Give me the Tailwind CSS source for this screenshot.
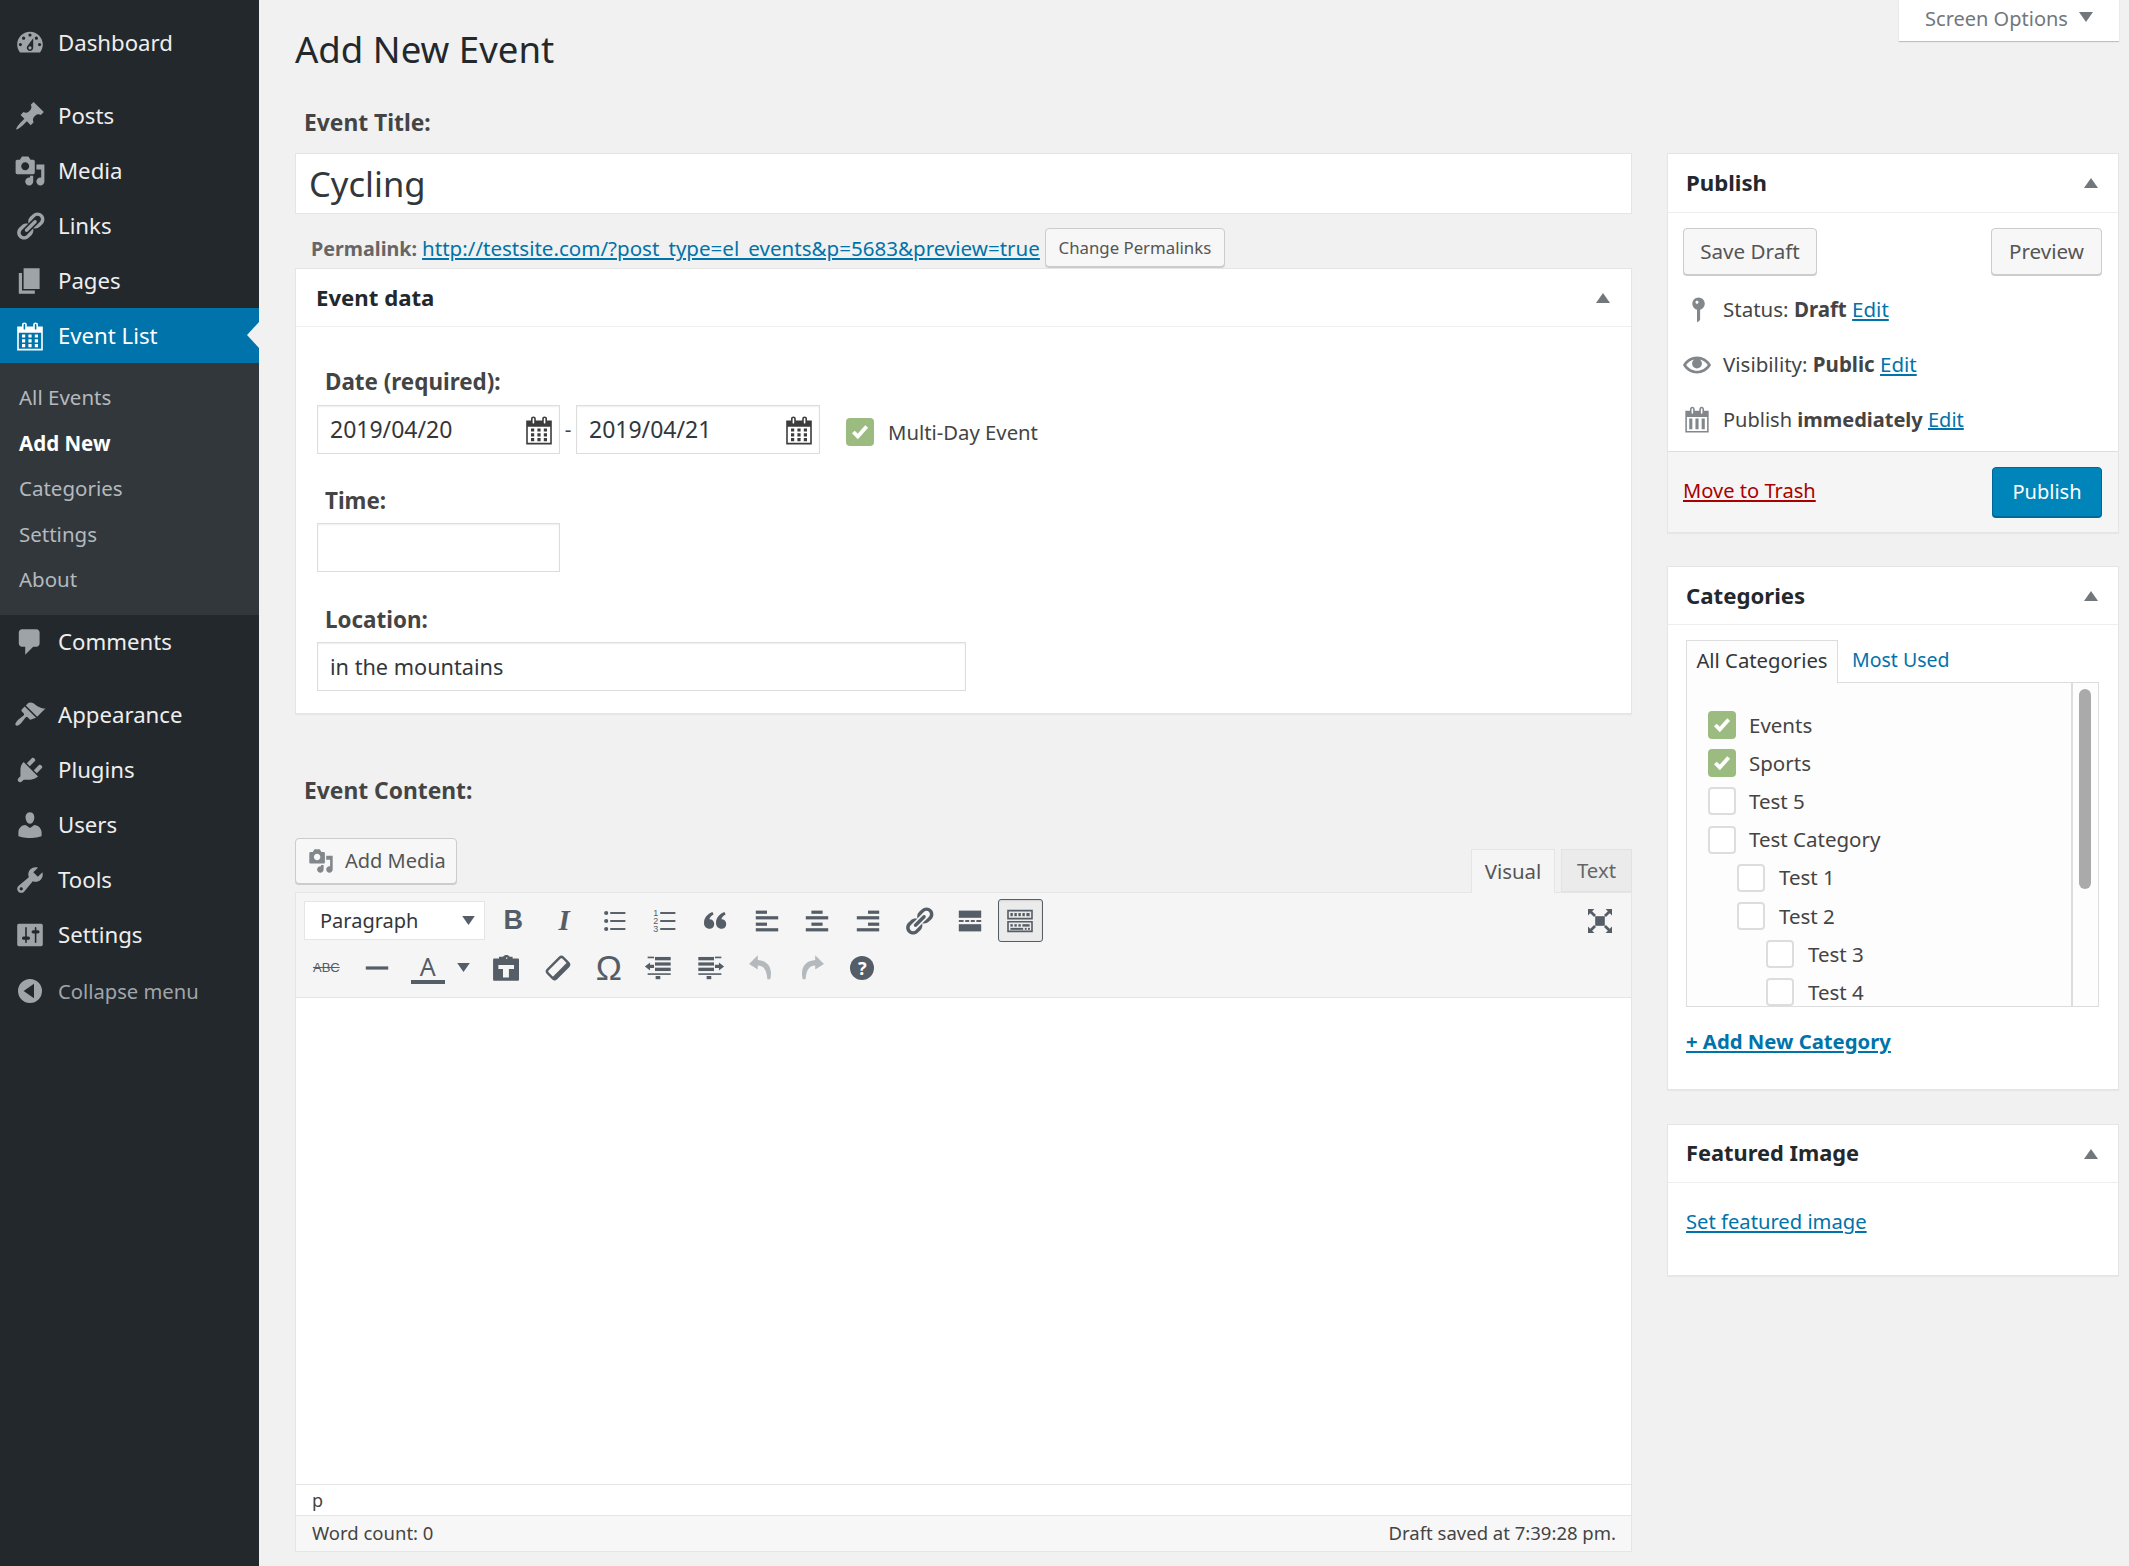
<!DOCTYPE html>
<html lang="en">
<head>
<meta charset="utf-8">
<title>Add New Event</title>
<script src="https://cdn.jsdelivr.net/npm/@tailwindcss/browser@4"></script>
</head>
<body class="flex w-[2129px] h-[1566px] overflow-hidden bg-[#f1f1f1] text-[#444] text-[20.5px] font-['Noto_Sans',sans-serif]">

<nav class="w-[259px] shrink-0 bg-[#23282d] pt-[15px] text-[22.2px] text-[#eee]">
  <a class="flex h-[55px] items-center gap-[12px] pl-[14px] mb-[18px]"><svg class="w-[32px] h-[32px] fill-[#9ea3a8]" viewBox="0 0 20 20"><path d="M3.76 16h12.48c1.1-1.37 1.76-3.11 1.76-5 0-4.42-3.58-8-8-8s-8 3.58-8 8c0 1.89.66 3.63 1.76 5zM10 4c.55 0 1 .45 1 1s-.45 1-1 1-1-.45-1-1 .45-1 1-1zM6 6c.55 0 1 .45 1 1s-.45 1-1 1-1-.45-1-1 .45-1 1-1zm8 0c.55 0 1 .45 1 1s-.45 1-1 1-1-.45-1-1 .45-1 1-1zm-5.37 5.55L12 7v6c0 1.1-.9 2-2 2s-2-.9-2-2c0-.57.24-1.08.63-1.45zM4 10c.55 0 1 .45 1 1s-.45 1-1 1-1-.45-1-1 .45-1 1-1zm12 0c.55 0 1 .45 1 1s-.45 1-1 1-1-.45-1-1 .45-1 1-1zm-5 3c0-.55-.45-1-1-1s-1 .45-1 1 .45 1 1 1 1-.45 1-1z" fill-rule="evenodd"/></svg>Dashboard</a>
  <a class="flex h-[55px] items-center gap-[12px] pl-[14px]"><svg class="w-[32px] h-[32px] fill-[#9ea3a8]" viewBox="0 0 20 20"><path d="M10.44 3.02l1.82-1.82 6.36 6.35-1.83 1.82c-1.05-.68-2.48-.57-3.41.36l-.75.75c-.92.93-1.04 2.35-.35 3.41l-1.83 1.82-2.41-2.41-2.8 2.79c-.42.42-3.38 2.71-3.8 2.29s1.86-3.39 2.28-3.81l2.79-2.79L4.1 9.36l1.83-1.82c1.05.69 2.48.57 3.4-.36l.75-.75c.93-.92 1.05-2.35.36-3.41z"/></svg>Posts</a>
  <a class="flex h-[55px] items-center gap-[12px] pl-[14px]"><svg class="w-[32px] h-[32px] fill-[#9ea3a8]" viewBox="0 0 20 20"><path d="M13 11V4c0-.55-.45-1-1-1h-1.67L9 1H5L3.67 3H2c-.55 0-1 .45-1 1v7c0 .55.45 1 1 1h10c.55 0 1-.45 1-1zM7 4.5c1.38 0 2.5 1.12 2.5 2.5S8.38 9.5 7 9.5 4.5 8.38 4.5 7 5.62 4.5 7 4.5zM14 6h5v10.5c0 1.38-1.12 2.5-2.5 2.5S14 17.88 14 16.5s1.12-2.5 2.5-2.5c.17 0 .34.02.5.05V9h-3V6zm-4 8.05V13h2v3.5c0 1.38-1.12 2.5-2.5 2.5S7 17.88 7 16.5 8.12 14 9.5 14c.17 0 .34.02.5.05z"/></svg>Media</a>
  <a class="flex h-[55px] items-center gap-[12px] pl-[14px]"><svg class="w-[32px] h-[32px] fill-[#9ea3a8]" viewBox="0 0 20 20"><path d="M17.74 2.76c1.68 1.69 1.68 4.41 0 6.1l-1.53 1.52c-1.12 1.12-2.7 1.47-4.14 1.09l2.62-2.61.76-.77.76-.76c.84-.84.84-2.2 0-3.04-.84-.85-2.2-.85-3.04 0l-.77.76-3.38 3.38c-.37-1.44-.02-3.02 1.1-4.14l1.52-1.53c1.69-1.68 4.42-1.68 6.1 0zM8.59 13.43l5.34-5.34c.42-.42.42-1.1 0-1.52-.44-.43-1.13-.39-1.53 0l-5.33 5.34c-.42.42-.42 1.1 0 1.52.44.43 1.13.39 1.52 0zm-.76 2.29l4.14-4.15c.38 1.44.03 3.02-1.09 4.14l-1.52 1.53c-1.69 1.68-4.41 1.68-6.1 0-1.68-1.68-1.68-4.42 0-6.1l1.53-1.52c1.12-1.12 2.7-1.47 4.14-1.1l-4.14 4.15c-.85.84-.85 2.2 0 3.05.84.84 2.2.84 3.04 0z"/></svg>Links</a>
  <a class="flex h-[55px] items-center gap-[12px] pl-[14px]"><svg class="w-[32px] h-[32px] fill-[#9ea3a8]" viewBox="0 0 20 20"><path d="M6 15V2h10v13H6zm-1 1h8v2H3V5h2v11z"/></svg>Pages</a>
  <a class="relative flex h-[55px] items-center gap-[12px] pl-[14px] bg-[#0073aa] text-white"><svg class="w-[32px] h-[32px] fill-white" viewBox="0 0 20 20"><path d="M15 4h3v15H2V4h3V3c0-.41.15-.76.44-1.06.29-.29.65-.44 1.06-.44s.77.15 1.06.44c.29.3.44.65.44 1.06v1h4V3c0-.41.15-.76.44-1.06.29-.29.65-.44 1.06-.44s.77.15 1.06.44c.29.3.44.65.44 1.06v1zM6 3v2.5c0 .14.05.26.15.36.09.09.21.14.35.14s.26-.05.35-.14c.1-.1.15-.22.15-.36V3c0-.14-.05-.26-.15-.35-.09-.1-.21-.15-.35-.15s-.26.05-.35.15c-.1.09-.15.21-.15.35zm7 0v2.5c0 .14.05.26.14.36.1.09.22.14.36.14s.26-.05.36-.14c.09-.1.14-.22.14-.36V3c0-.14-.05-.26-.14-.35-.1-.1-.22-.15-.36-.15s-.26.05-.36.15c-.09.09-.14.21-.14.35zm4 15V8H3v10h14zM7 9v2H5V9h2zm2 0h2v2H9V9zm4 2V9h2v2h-2zm-6 1v2H5v-2h2zm2 0h2v2H9v-2zm4 2v-2h2v2h-2zm-6 1v2H5v-2h2zm4 2H9v-2h2v2zm4 0h-2v-2h2v2z"/></svg>Event List<span class="absolute right-0 top-[14px] border-y-[13px] border-r-[12px] border-y-transparent border-r-[#f1f1f1]"></span></a>
  <div class="bg-[#32373c] pt-[12px] pb-[12px] pl-[19px] text-[20.5px] text-[#b4b9be]">
    <a class="flex h-[45.5px] items-center">All Events</a>
    <a class="flex h-[45.5px] items-center font-bold text-white">Add New</a>
    <a class="flex h-[45.5px] items-center">Categories</a>
    <a class="flex h-[45.5px] items-center">Settings</a>
    <a class="flex h-[45.5px] items-center">About</a>
  </div>
  <a class="flex h-[55px] items-center gap-[12px] pl-[14px] mb-[18px]"><svg class="w-[32px] h-[32px] fill-[#9ea3a8]" viewBox="0 0 20 20"><path d="M5 2h9c1.1 0 2 .9 2 2v7c0 1.1-.9 2-2 2h-2l-5 5v-5H5c-1.1 0-2-.9-2-2V4c0-1.1.9-2 2-2z"/></svg>Comments</a>
  <a class="flex h-[55px] items-center gap-[12px] pl-[14px]"><svg class="w-[32px] h-[32px] fill-[#9ea3a8]" viewBox="0 0 20 20"><path d="M14.48 11.06L7.41 3.99l1.5-1.5c.5-.56 2.3-.47 3.51.32 1.21.8 1.43 1.28 2.91 2.1 1.18.64 2.45 1.26 4.45.85zm-.71.71L6.7 4.7 4.93 6.47c-.39.39-.39 1.02 0 1.41l1.06 1.06c.39.39.39 1.03 0 1.42-.6.6-1.43 1.11-2.21 1.69-.35.26-.7.53-1.01.84-1.34 1.34-2.37 2.9-1.68 3.59.69.69 2.26-.34 3.61-1.69.31-.31.58-.66.84-1.01.58-.78 1.09-1.61 1.69-2.21.39-.39 1.02-.39 1.41 0l1.06 1.06c.39.39 1.02.39 1.41 0z"/></svg>Appearance</a>
  <a class="flex h-[55px] items-center gap-[12px] pl-[14px]"><svg class="w-[32px] h-[32px] fill-[#9ea3a8]" viewBox="0 0 20 20"><path d="M13.11 4.36L9.87 7.6 8 5.73l3.24-3.24c.35-.34 1.05-.2 1.56.32.52.51.66 1.21.31 1.55zm-8 1.77l.91-1.12 9.01 9.01-1.19.84c-.71.71-2.63 1.16-3.82 1.16H6.14L4.9 17.26c-.59.59-1.54.59-2.12 0-.59-.58-.59-1.53 0-2.12l1.24-1.24v-3.88c0-1.13.4-3.19 1.09-3.89zm7.26 3.97l3.24-3.24c.34-.35 1.04-.21 1.55.31.52.51.66 1.21.31 1.55l-3.24 3.25z"/></svg>Plugins</a>
  <a class="flex h-[55px] items-center gap-[12px] pl-[14px]"><svg class="w-[32px] h-[32px] fill-[#9ea3a8]" viewBox="0 0 20 20"><path d="M10 9.25c-2.27 0-2.73-3.44-2.73-3.44C7 4.02 7.82 2 9.97 2c2.16 0 2.98 2.02 2.71 3.81 0 0-.41 3.44-2.68 3.44zm0 2.57L12.72 10c2.39 0 4.52 2.33 4.52 4.53v2.49s-3.65 1.13-7.24 1.13c-3.65 0-7.24-1.13-7.24-1.13v-2.49c0-2.25 1.94-4.48 4.47-4.48z"/></svg>Users</a>
  <a class="flex h-[55px] items-center gap-[12px] pl-[14px]"><svg class="w-[32px] h-[32px] fill-[#9ea3a8]" viewBox="0 0 20 20"><path d="M16.68 9.77c-1.34 1.34-3.3 1.67-4.95.99l-5.41 6.52c-.99.99-2.59.99-3.58 0s-.99-2.59 0-3.57l6.52-5.42c-.68-1.65-.35-3.61.99-4.95 1.28-1.28 3.12-1.62 4.72-1.06l-2.89 2.89 2.82 2.82 2.86-2.87c.53 1.58.18 3.39-1.08 4.65zM3.81 16.21c.4.39 1.04.39 1.43 0 .4-.4.4-1.04 0-1.43-.39-.4-1.03-.4-1.43 0-.39.39-.39 1.03 0 1.43z"/></svg>Tools</a>
  <a class="flex h-[55px] items-center gap-[12px] pl-[14px]"><svg class="w-[32px] h-[32px] fill-[#9ea3a8]" viewBox="0 0 20 20"><path d="M18 16V4c0-.55-.45-1-1-1H3c-.55 0-1 .45-1 1v12c0 .55.45 1 1 1h14c.55 0 1-.45 1-1zM8 11h1c.55 0 1 .45 1 1s-.45 1-1 1H8v1.5c0 .28-.22.5-.5.5s-.5-.22-.5-.5V13H6c-.55 0-1-.45-1-1s.45-1 1-1h1V5.5c0-.28.22-.5.5-.5s.5.22.5.5V11zm5-2h-1c-.55 0-1-.45-1-1s.45-1 1-1h1V5.5c0-.28.22-.5.5-.5s.5.22.5.5V7h1c.55 0 1 .45 1 1s-.45 1-1 1h-1v5.5c0 .28-.22.5-.5.5s-.5-.22-.5-.5V9z"/></svg>Settings</a>
  <a class="mt-[1px] flex h-[55px] items-center gap-[12px] pl-[14px] text-[20.2px] text-[#a0a5aa]"><svg class="w-[32px] h-[32px] fill-[#a0a5aa]" viewBox="0 0 20 20"><path fill-rule="evenodd" d="M10 2.500a7.500 7.500 0 1 0 0 15 7.500 7.500 0 0 0 0-15zM12.500 5.500v9L6 10z"/></svg>Collapse menu</a>
</nav>

<main class="w-[1870px] pl-[36px] pr-[10px]">
  <header class="flex h-[100px] items-start justify-between">
    <h1 class="mt-[24px] text-[36.6px] leading-[50px] text-[#23282d]">Add New Event</h1>
    <div class="flex h-[41px] w-[220px] items-center justify-center gap-[11px] bg-white pb-[3px] text-[20px] text-[#72777c] shadow-[0_1px_1px_rgba(0,0,0,0.2)]">Screen Options<svg class="w-[14px] h-[10px] fill-[#72777c] mb-[4px]" viewBox="0 0 14 10"><path d="M0 0h14L7 10z"/></svg></div>
  </header>

  <div class="flex gap-[35px]">
    <section class="w-[1337px]">
      <div class="flex h-[44px] items-center pl-[9px] pt-[2px] text-[22.8px] font-bold">Event Title:</div>
      <div class="mt-[9px] flex h-[61px] items-center border border-[#e5e5e5] bg-white pl-[13px] text-[34.6px] text-[#32373c]">Cycling</div>
      <div class="flex h-[54px] items-start pl-[16px] pt-[14px]">
        <div class="flex h-[39px] items-center gap-[5px] pt-[2px]"><b class="text-[19.7px] text-[#666]">Permalink:</b><a class="mr-[1px] text-[20.55px] text-[#0073aa] underline">http://testsite.com/?post_type=el_events&amp;p=5683&amp;preview=true</a></div>
        <button class="ml-[4px] h-[39px] w-[180px] rounded-[4px] border border-[#ccc] bg-[#f7f7f7] text-[16.8px] text-[#555] shadow-[0_1px_0_#ccc]">Change Permalinks</button>
      </div>

      <div class="border border-[#e5e5e5] bg-white shadow-[0_1px_1px_rgba(0,0,0,0.04)] h-[446px]">
        <div class="flex h-[58px] items-center justify-between border-b border-[#eee] pl-[20px] pr-[21px]"><h2 class="text-[22.2px] font-bold text-[#23282d]">Event data</h2><svg class="w-[14px] h-[10px] fill-[#72777c]" viewBox="0 0 14 10"><path d="M7 0l7 10H0z"/></svg></div>
        <div class="pl-[21px]">
          <div class="mt-[38px] flex h-[32px] items-center pl-[8px] pt-[2px] text-[22.4px] font-bold">Date (required):</div>
          <div class="mt-[8px] flex h-[49px] items-center">
            <div class="flex h-[49px] w-[243px] items-center justify-between border border-[#ddd] pl-[12px] pr-[4px] text-[23px] text-[#32373c] shadow-[inset_0_1px_2px_rgba(0,0,0,0.07)]">2019/04/20<svg class="w-[32px] h-[32px] fill-[#3c3c3c]" viewBox="0 0 20 20"><path d="M15 4h3v15H2V4h3V3c0-.41.15-.76.44-1.06.29-.29.65-.44 1.06-.44s.77.15 1.06.44c.29.3.44.65.44 1.06v1h4V3c0-.41.15-.76.44-1.06.29-.29.65-.44 1.06-.44s.77.15 1.06.44c.29.3.44.65.44 1.06v1zM6 3v2.5c0 .14.05.26.15.36.09.09.21.14.35.14s.26-.05.35-.14c.1-.1.15-.22.15-.36V3c0-.14-.05-.26-.15-.35-.09-.1-.21-.15-.35-.15s-.26.05-.35.15c-.1.09-.15.21-.15.35zm7 0v2.5c0 .14.05.26.14.36.1.09.22.14.36.14s.26-.05.36-.14c.09-.1.14-.22.14-.36V3c0-.14-.05-.26-.14-.35-.1-.1-.22-.15-.36-.15s-.26.05-.36.15c-.09.09-.14.21-.14.35zm4 15V8H3v10h14zM7 9v2H5V9h2zm2 0h2v2H9V9zm4 2V9h2v2h-2zm-6 1v2H5v-2h2zm2 0h2v2H9v-2zm4 2v-2h2v2h-2zm-6 1v2H5v-2h2zm4 2H9v-2h2v2zm4 0h-2v-2h2v2z"/></svg></div>
            <span class="w-[16px] text-center">-</span>
            <div class="flex h-[49px] w-[244px] items-center justify-between border border-[#ddd] pl-[12px] pr-[4px] text-[23px] text-[#32373c] shadow-[inset_0_1px_2px_rgba(0,0,0,0.07)]">2019/04/21<svg class="w-[32px] h-[32px] fill-[#3c3c3c]" viewBox="0 0 20 20"><path d="M15 4h3v15H2V4h3V3c0-.41.15-.76.44-1.06.29-.29.65-.44 1.06-.44s.77.15 1.06.44c.29.3.44.65.44 1.06v1h4V3c0-.41.15-.76.44-1.06.29-.29.65-.44 1.06-.44s.77.15 1.06.44c.29.3.44.65.44 1.06v1zM6 3v2.5c0 .14.05.26.15.36.09.09.21.14.35.14s.26-.05.35-.14c.1-.1.15-.22.15-.36V3c0-.14-.05-.26-.15-.35-.09-.1-.21-.15-.35-.15s-.26.05-.35.15c-.1.09-.15.21-.15.35zm7 0v2.5c0 .14.05.26.14.36.1.09.22.14.36.14s.26-.05.36-.14c.09-.1.14-.22.14-.36V3c0-.14-.05-.26-.14-.35-.1-.1-.22-.15-.36-.15s-.26.05-.36.15c-.09.09-.14.21-.14.35zm4 15V8H3v10h14zM7 9v2H5V9h2zm2 0h2v2H9V9zm4 2V9h2v2h-2zm-6 1v2H5v-2h2zm2 0h2v2H9v-2zm4 2v-2h2v2h-2zm-6 1v2H5v-2h2zm4 2H9v-2h2v2zm4 0h-2v-2h2v2z"/></svg></div>
            <span class="ml-[26px] mt-[4px] flex h-[28px] w-[28px] items-center justify-center rounded-[4px] bg-[#9cbb80]"><svg class="w-[20px] h-[20px] fill-none stroke-white stroke-[3.5]" viewBox="0 0 18 18"><path d="M3 9l4 4 8-9"/></svg></span>
            <span class="ml-[14px] mt-[6px] text-[20.3px]">Multi-Day Event</span>
          </div>
          <div class="mt-[30px] flex h-[32px] items-center pl-[8px] pt-[2px] text-[22.4px] font-bold">Time:</div>
          <div class="mt-[7px] h-[49px] w-[243px] border border-[#ddd] shadow-[inset_0_1px_2px_rgba(0,0,0,0.07)]"></div>
          <div class="mt-[31px] flex h-[32px] items-center pl-[8px] pt-[2px] text-[22.4px] font-bold">Location:</div>
          <div class="mt-[7px] flex h-[49px] w-[649px] items-center border border-[#ddd] pl-[12px] pt-[1px] text-[21.7px] text-[#32373c] shadow-[inset_0_1px_2px_rgba(0,0,0,0.07)]">in the mountains</div>
        </div>
      </div>

      <div class="mt-[60px] flex h-[32px] items-center pl-[9px] pt-[2px] text-[22.8px] font-bold">Event Content:</div>
      <div class="mt-[32px] flex h-[54px] items-start justify-between">
        <button class="flex h-[46px] w-[162px] items-center gap-[11px] rounded-[4px] border border-[#ccc] bg-[#f7f7f7] pl-[12px] text-[20px] text-[#555] shadow-[0_1px_0_#ccc]"><svg class="w-[26px] h-[26px] fill-[#82878c] shrink-0" viewBox="0 0 20 20"><path d="M13 11V4c0-.55-.45-1-1-1h-1.67L9 1H5L3.67 3H2c-.55 0-1 .45-1 1v7c0 .55.45 1 1 1h10c.55 0 1-.45 1-1zM7 4.5c1.38 0 2.5 1.12 2.5 2.5S8.38 9.5 7 9.5 4.5 8.38 4.5 7 5.62 4.5 7 4.5zM14 6h5v10.5c0 1.38-1.12 2.5-2.5 2.5S14 17.88 14 16.5s1.12-2.5 2.5-2.5c.17 0 .34.02.5.05V9h-3V6zm-4 8.05V13h2v3.5c0 1.38-1.12 2.5-2.5 2.5S7 17.88 7 16.5 8.12 14 9.5 14c.17 0 .34.02.5.05z"/></svg>Add Media</button>
        <div class="relative z-10 mt-[11px] flex h-[44px] items-stretch gap-[6px] text-[20.4px] text-[#555]">
          <span class="flex w-[84px] items-center justify-center border border-b-0 border-[#e5e5e5] bg-[#f5f5f5]">Visual</span>
          <span class="flex h-[43px] w-[71px] items-center justify-center border border-[#e2e2e2] bg-[#ebebeb] text-[#666]">Text</span>
        </div>
      </div>

      <div class="border border-[#e5e5e5] bg-white">
        <div class="h-[105px] border-b border-[#e5e5e5] bg-[#f5f5f5] pt-[4px]">
          <div class="flex h-[47px] items-center pl-[8px]">
            <div class="mr-[3px] flex h-[39px] w-[181px] items-center justify-between border border-[#e5e5e5] bg-white pl-[15px] pr-[9px] text-[20px] text-[#32373c]">Paragraph<svg class="w-[13px] h-[9px] fill-[#555d66]" viewBox="0 0 14 10"><path d="M0 0h14L7 10z"/></svg></div>
            <span class="flex h-[39px] w-[50.7px] items-center justify-center font-['Liberation_Sans',sans-serif] text-[27px] font-bold text-[#555d66]">B</span>
            <span class="flex h-[39px] w-[50.7px] items-center justify-center font-['Liberation_Serif',serif] text-[29px] font-bold italic text-[#555d66]">I</span>
            <span class="flex w-[50.7px] justify-center"><svg class="w-[32px] h-[32px] fill-[#555d66]" viewBox="0 0 20 20"><circle cx="4.5" cy="5" r="1.3"/><circle cx="4.5" cy="10" r="1.3"/><circle cx="4.5" cy="15" r="1.3"/><rect x="7" y="4.4" width="9.5" height="1.2"/><rect x="7" y="9.4" width="9.5" height="1.2"/><rect x="7" y="14.4" width="9.5" height="1.2"/></svg></span>
            <span class="flex w-[50.7px] justify-center"><svg class="w-[32px] h-[32px] fill-[#555d66]" viewBox="0 0 20 20"><text x="2.6" y="7" font-size="5.6" font-family="Liberation Sans">1</text><text x="2.6" y="12" font-size="5.6" font-family="Liberation Sans">2</text><text x="2.6" y="17" font-size="5.6" font-family="Liberation Sans">3</text><rect x="7" y="4.4" width="9.5" height="1.2"/><rect x="7" y="9.4" width="9.5" height="1.2"/><rect x="7" y="14.4" width="9.5" height="1.2"/></svg></span>
            <span class="flex w-[50.7px] justify-center"><svg class="w-[32px] h-[32px] fill-[#555d66]" viewBox="0 0 20 20"><path d="M2.500 11.200C2.500 8 4.600 5.600 7.800 4.400l.7 1.500C7 6.700 6 7.700 5.900 8.900c1.700 0 3 1 3 2.900 0 1.800-1.200 3-2.900 3-2 0-3.500-1.400-3.500-3.600z"/><path d="M10 11.200C10 8 12.100 5.600 15.300 4.400l.7 1.500c-1.500.8-2.500 1.800-2.600 3 1.700 0 3 1 3 2.900 0 1.800-1.200 3-2.900 3-2 0-3.500-1.400-3.500-3.600z"/></svg></span>
            <span class="flex w-[50.7px] justify-center"><svg class="w-[32px] h-[32px] fill-[#555d66]" viewBox="0 0 20 20"><rect x="3" y="3.500" width="7" height="2"/><rect x="3" y="7" width="14" height="2"/><rect x="3" y="11" width="7" height="2"/><rect x="3" y="14.500" width="14" height="2"/></svg></span>
            <span class="flex w-[50.7px] justify-center"><svg class="w-[32px] h-[32px] fill-[#555d66]" viewBox="0 0 20 20"><rect x="6.500" y="3.500" width="7" height="2"/><rect x="3" y="7" width="14" height="2"/><rect x="6.500" y="11" width="7" height="2"/><rect x="3" y="14.500" width="14" height="2"/></svg></span>
            <span class="flex w-[50.7px] justify-center"><svg class="w-[32px] h-[32px] fill-[#555d66]" viewBox="0 0 20 20"><rect x="10" y="3.500" width="7" height="2"/><rect x="3" y="7" width="14" height="2"/><rect x="10" y="11" width="7" height="2"/><rect x="3" y="14.500" width="14" height="2"/></svg></span>
            <span class="flex w-[50.7px] justify-center"><svg class="w-[32px] h-[32px] fill-[#555d66]" viewBox="0 0 20 20"><path d="M17.74 2.76c1.68 1.69 1.68 4.41 0 6.1l-1.53 1.52c-1.12 1.12-2.7 1.47-4.14 1.09l2.62-2.61.76-.77.76-.76c.84-.84.84-2.2 0-3.04-.84-.85-2.2-.85-3.04 0l-.77.76-3.38 3.38c-.37-1.44-.02-3.02 1.1-4.14l1.52-1.53c1.69-1.68 4.42-1.68 6.1 0zM8.59 13.43l5.34-5.34c.42-.42.42-1.1 0-1.52-.44-.43-1.13-.39-1.53 0l-5.33 5.34c-.42.42-.42 1.1 0 1.52.44.43 1.13.39 1.52 0zm-.76 2.29l4.14-4.15c.38 1.44.03 3.02-1.09 4.14l-1.52 1.53c-1.69 1.68-4.41 1.68-6.1 0-1.68-1.68-1.68-4.42 0-6.1l1.53-1.52c1.12-1.12 2.7-1.47 4.14-1.1l-4.14 4.15c-.85.84-.85 2.2 0 3.05.84.84 2.2.84 3.04 0z"/></svg></span>
            <span class="flex w-[50.7px] justify-center"><svg class="w-[32px] h-[32px] fill-[#555d66]" viewBox="0 0 20 20"><rect x="3" y="3.500" width="14" height="4.500"/><rect x="3" y="9.400" width="3" height="1.200"/><rect x="7" y="9.400" width="2.500" height="1.200"/><rect x="10.500" y="9.400" width="2.500" height="1.200"/><rect x="14" y="9.400" width="3" height="1.200"/><rect x="3" y="12" width="14" height="4.500"/></svg></span>
            <span class="ml-[3px] flex h-[43px] w-[45px] items-center justify-center rounded-[3px] border border-[#555d66] bg-[#ebebeb] shadow-[inset_0_1px_2px_rgba(0,0,0,0.1)]"><svg class="w-[32px] h-[32px] fill-[#555d66]" viewBox="0 0 20 20"><path fill-rule="evenodd" d="M2 3h16v6H2zM3 4v4h14V4z"/><rect x="4" y="5" width="1.500" height="2"/><rect x="6.500" y="5" width="1.500" height="2"/><rect x="9" y="5" width="1.500" height="2"/><rect x="11.500" y="5" width="1.500" height="2"/><rect x="14" y="5" width="2" height="2"/><path fill-rule="evenodd" d="M2 10h16v7H2zM3 11v5h14v-5z"/><rect x="4" y="12" width="1.500" height="1.500"/><rect x="6.500" y="12" width="1.500" height="1.500"/><rect x="9" y="12" width="1.500" height="1.500"/><rect x="11.500" y="12" width="4.500" height="1.500"/><rect x="4" y="14.300" width="8" height="1.200"/><rect x="13" y="14.300" width="1.200" height="1.200"/><rect x="15" y="14.300" width="1.200" height="1.200"/></svg></span>
            <span class="ml-auto mr-[15px] flex"><svg class="w-[32px] h-[32px] fill-[#555d66]" viewBox="0 0 20 20"><rect x="7" y="7" width="6" height="6"/><path d="M2.500 2.500h4l-1.400 1.400 2.400 2.400-1.200 1.200-2.400-2.400L2.500 6.500zM17.500 2.500v4l-1.400-1.400-2.400 2.400-1.200-1.200 2.400-2.400-1.400-1.400zM2.500 17.500v-4l1.400 1.400 2.400-2.400 1.200 1.200-2.400 2.400 1.400 1.400zM17.500 17.500h-4l1.400-1.400-2.400-2.400 1.200-1.200 2.400 2.400 1.400-1.400z"/></svg></span>
          </div>
          <div class="flex h-[47px] items-center pl-[5px]">
            <span class="flex w-[50.7px] justify-center font-['Liberation_Sans',sans-serif] text-[13px] text-[#555d66] line-through">ABC</span>
            <span class="flex w-[50.7px] justify-center"><svg class="w-[32px] h-[32px] fill-[#555d66]" viewBox="0 0 20 20"><rect x="3" y="9" width="14" height="2"/></svg></span>
            <span class="flex w-[50.7px] flex-col items-center text-[25px] leading-[30px] text-[#555d66]"><span class="h-[29px]">A</span><span class="h-[4px] w-[34px] bg-[#555d66]"></span></span>
            <span class="mr-[8px] flex w-[21px] justify-center"><svg class="w-[13px] h-[9px] fill-[#555d66]" viewBox="0 0 14 10"><path d="M0 0h14L7 10z"/></svg></span>
            <span class="flex w-[50.7px] justify-center"><svg class="w-[32px] h-[32px] fill-[#555d66]" viewBox="0 0 20 20"><path fill-rule="evenodd" d="M5 4V3h2.500C8 2.300 8.800 1.900 9.600 1.900s1.600.4 2.100 1.100H13.500V4h3.200c.5 0 .8.300.8.800v12.400c0 .5-.3.800-.8.800H2.100c-.5 0-.8-.3-.8-.8V4.800c0-.5.300-.8.800-.8zM9.400 3.400h.8v.8h-.8zM4.600 8.100v2.500h2.900V16h3.700v-5.400h3.200V8.100z"/></svg></span>
            <span class="flex w-[50.7px] justify-center"><svg class="w-[32px] h-[32px] fill-[#555d66]" viewBox="0 0 20 20"><g transform="rotate(-45 10 10)"><rect x="3.200" y="6.200" width="13.600" height="7.600" rx="1.500" fill="none" stroke="#555d66" stroke-width="1.500"/><rect x="3.200" y="11.600" width="13.600" height="2.200"/></g></svg></span>
            <span class="flex w-[50.7px] justify-center font-['Liberation_Sans',sans-serif] text-[35px] leading-[32px] text-[#555d66]">Ω</span>
            <span class="flex w-[50.7px] justify-center"><svg class="w-[32px] h-[32px] fill-[#555d66]" viewBox="0 0 20 20"><rect x="2.900" y="2.900" width="4" height="1"/><rect x="7.500" y="3.100" width="9.800" height="2.100"/><rect x="7.500" y="6.500" width="9.800" height="2"/><rect x="7.500" y="9.800" width="9.800" height="2.100"/><rect x="2.900" y="13.300" width="14.400" height="1"/><rect x="7.900" y="15" width="2.900" height="2"/><path d="M1.200 9l3.200-2.500V8h2.500v2H4.400v1.500z"/></svg></span>
            <span class="flex w-[50.7px] justify-center"><svg class="w-[32px] h-[32px] fill-[#555d66]" viewBox="0 0 20 20"><rect x="13.100" y="2.900" width="4" height="1"/><rect x="2.700" y="3.100" width="9.800" height="2.100"/><rect x="2.700" y="6.500" width="9.800" height="2"/><rect x="2.700" y="9.800" width="9.800" height="2.100"/><rect x="2.700" y="13.300" width="14.400" height="1"/><rect x="7.900" y="15" width="2.900" height="2"/><path d="M18.800 9l-3.200-2.500V8h-2.500v2h2.500v1.500z"/></svg></span>
            <span class="flex w-[50.7px] justify-center"><svg class="w-[32px] h-[32px] fill-[#b4b9be]" viewBox="0 0 20 20"><path d="M8 2 2.500 7.500 8 11V8.500c3.500 0 5.500 2.500 6 8.500h1.800c1.500-6.500-.8-11.500-7.800-12z"/></svg></span>
            <span class="flex w-[50.7px] justify-center"><svg class="w-[32px] h-[32px] fill-[#b4b9be]" viewBox="0 0 20 20"><path d="M12 2l5.500 5.500L12 11V8.500c-3.500 0-5.500 2.500-6 8.500H4.200C2.700 10.500 5 5.500 12 5z"/></svg></span>
            <span class="flex w-[50.7px] justify-center"><span class="flex h-[24px] w-[24px] items-center justify-center rounded-full bg-[#555d66] text-[18px] font-bold leading-none text-white">?</span></span>
          </div>
        </div>
        <div class="h-[486px] bg-white"></div>
        <div class="flex h-[31px] items-center border-t border-[#e5e5e5] pl-[16px] text-[18px] text-[#444]">p</div>
        <div class="flex h-[36px] items-center justify-between border-t border-[#e5e5e5] bg-[#f7f7f7] pl-[16px] pr-[15px] pb-[2px] text-[18.5px] text-[#444]"><span>Word count: 0</span><span>Draft saved at 7:39:28 pm.</span></div>
      </div>
    </section>

    <aside class="w-[452px] pt-[53px]">
      <div class="h-[380px] border border-[#e5e5e5] bg-white shadow-[0_1px_1px_rgba(0,0,0,0.04)]">
        <div class="flex h-[59px] items-center justify-between border-b border-[#eee] pl-[18px] pr-[20px]"><h2 class="text-[22.2px] font-bold text-[#23282d]">Publish</h2><svg class="w-[14px] h-[10px] fill-[#72777c]" viewBox="0 0 14 10"><path d="M7 0l7 10H0z"/></svg></div>
        <div class="flex justify-between px-[15px] pt-[15px] pr-[16px]">
          <button class="h-[47px] w-[134px] rounded-[4px] border border-[#ccc] bg-[#f7f7f7] text-[20.6px] text-[#555] shadow-[0_1px_0_#ccc]">Save Draft</button>
          <button class="h-[47px] w-[111px] rounded-[4px] border border-[#ccc] bg-[#f7f7f7] text-[20.6px] text-[#555] shadow-[0_1px_0_#ccc]">Preview</button>
        </div>
        <div class="mt-[7px] flex h-[55px] items-center pl-[15px]"><svg class="w-[28px] h-[32px] fill-[#82878c] shrink-0" viewBox="0 0 18 20"><path d="M14 6c0 1.860-1.280 3.410-3 3.860V16c0 1-2 2-2 2V9.860c-1.720-.45-3-2-3-3.860 0-2.210 1.790-4 4-4s4 1.790 4 4zM8 5c0 .55.45 1 1 1s1-.45 1-1-.45-1-1-1-1 .45-1 1z"/></svg><span class="ml-[12px]">Status: <b>Draft</b> <a class="text-[#0073aa] underline">Edit</a></span></div>
        <div class="flex h-[55px] items-center pl-[15px]"><svg class="w-[28px] h-[28px] fill-[#82878c] shrink-0" viewBox="0 0 20 20"><path d="M19.700 9.400C17.700 6 14 3.900 10 3.900S2.300 6 .3 9.400L0 10l.3.6c2 3.400 5.700 5.500 9.700 5.500s7.700-2.100 9.700-5.500l.3-.6-.3-.6zM10 14.100c-3.100 0-6-1.600-7.700-4.100C3.600 8 5.700 6.600 8 6.100c-.9.6-1.500 1.700-1.500 2.900 0 1.900 1.600 3.500 3.500 3.500s3.500-1.600 3.500-3.500c0-1.200-.6-2.300-1.500-2.900 2.300.5 4.400 1.900 5.700 3.900-1.700 2.500-4.600 4.100-7.700 4.100z"/></svg><span class="ml-[12px]">Visibility: <b>Public</b> <a class="text-[#0073aa] underline">Edit</a></span></div>
        <div class="flex h-[55px] items-center pl-[15px]"><svg class="w-[28px] h-[32px] fill-[#82878c] shrink-0" viewBox="0 0 18 20"><path fill-rule="evenodd" d="M13.500 4h3v14H1.500V4h3V3c0-.83.67-1.500 1.500-1.500S7.500 2.170 7.500 3v1h3V3c0-.83.67-1.500 1.500-1.500s1.500.67 1.500 1.500zM5.500 3v2.500c0 .28.22.5.5.5s.5-.22.5-.5V3c0-.28-.22-.5-.5-.5s-.5.22-.5.5zm6 0v2.500c0 .28.22.5.5.5s.5-.22.5-.5V3c0-.28-.22-.5-.5-.5s-.5.22-.5.5zm4 14V8h-13v9zM4 9h2v7H4zm4 0h2v7H8zm4 0h2v7h-2z"/></svg><span class="ml-[12px] text-[20px]">Publish <b>immediately</b> <a class="text-[#0073aa] underline">Edit</a></span></div>
        <div class="mt-[4px] flex h-[81px] items-center justify-between border-t border-[#ddd] bg-[#f5f5f5] pl-[15px] pr-[16px]">
          <a class="pb-[1px] text-[20.1px] text-[#a00] underline">Move to Trash</a>
          <button class="h-[50px] w-[110px] rounded-[4px] border border-[#006799] bg-[#0085ba] text-[20px] text-white shadow-[0_1px_0_#006799]">Publish</button>
        </div>
      </div>

      <div class="mt-[33px] h-[524px] border border-[#e5e5e5] bg-white shadow-[0_1px_1px_rgba(0,0,0,0.04)]">
        <div class="flex h-[58px] items-center justify-between border-b border-[#eee] pl-[18px] pr-[20px]"><h2 class="text-[22.2px] font-bold text-[#23282d]">Categories</h2><svg class="w-[14px] h-[10px] fill-[#72777c]" viewBox="0 0 14 10"><path d="M7 0l7 10H0z"/></svg></div>
        <div class="px-[18px] pt-[15px]">
          <div class="relative z-10 -mb-[1px] flex h-[43px] items-end text-[20.3px]">
            <span class="flex h-[43px] w-[152px] items-center justify-center border border-b-0 border-[#ddd] bg-[#fdfdfd] pb-[4px] text-[#32373c]">All Categories</span>
            <a class="ml-[14px] flex h-[42px] items-center pb-[4px] text-[19.5px] text-[#0073aa]">Most Used</a>
          </div>
          <div class="flex h-[325px] w-[413px] border border-[#ddd]">
            <div class="flex-1 overflow-hidden border-r-2 border-[#ddd] bg-[#fdfdfd] pt-[23px] text-[20.5px]">
              <div class="flex h-[38.2px] items-center pl-[21px]"><span class="flex h-[28px] w-[28px] items-center justify-center rounded-[4px] bg-[#9cbb80]"><svg class="w-[20px] h-[20px] fill-none stroke-white stroke-[3.5]" viewBox="0 0 18 18"><path d="M3 9l4 4 8-9"/></svg></span><span class="ml-[13px]">Events</span></div>
              <div class="flex h-[38.2px] items-center pl-[21px]"><span class="flex h-[28px] w-[28px] items-center justify-center rounded-[4px] bg-[#9cbb80]"><svg class="w-[20px] h-[20px] fill-none stroke-white stroke-[3.5]" viewBox="0 0 18 18"><path d="M3 9l4 4 8-9"/></svg></span><span class="ml-[13px]">Sports</span></div>
              <div class="flex h-[38.2px] items-center pl-[21px]"><span class="h-[28px] w-[28px] rounded-[4px] border-2 border-[#ddd] bg-white"></span><span class="ml-[13px]">Test 5</span></div>
              <div class="flex h-[38.2px] items-center pl-[21px]"><span class="h-[28px] w-[28px] rounded-[4px] border-2 border-[#ddd] bg-white"></span><span class="ml-[13px]">Test Category</span></div>
              <div class="flex h-[38.2px] items-center pl-[50px]"><span class="h-[28px] w-[28px] rounded-[4px] border-2 border-[#ddd] bg-white"></span><span class="ml-[14px]">Test 1</span></div>
              <div class="flex h-[38.2px] items-center pl-[50px]"><span class="h-[28px] w-[28px] rounded-[4px] border-2 border-[#ddd] bg-white"></span><span class="ml-[14px]">Test 2</span></div>
              <div class="flex h-[38.2px] items-center pl-[79px]"><span class="h-[28px] w-[28px] rounded-[4px] border-2 border-[#ddd] bg-white"></span><span class="ml-[14px]">Test 3</span></div>
              <div class="flex h-[38.2px] items-center pl-[79px]"><span class="h-[28px] w-[28px] rounded-[4px] border-2 border-[#ddd] bg-white"></span><span class="ml-[14px]">Test 4</span></div>
            </div>
            <div class="w-[25px] bg-[#fdfdfd] pl-[6px] pt-[6px]"><div class="h-[200px] w-[12px] rounded-[6px] bg-[#aaa]"></div></div>
          </div>
          <a class="mt-[19px] block text-[20.3px] font-bold text-[#0073aa] underline">+ Add New Category</a>
        </div>
      </div>

      <div class="mt-[34px] h-[152px] border border-[#e5e5e5] bg-white shadow-[0_1px_1px_rgba(0,0,0,0.04)]">
        <div class="flex h-[58px] items-center justify-between border-b border-[#eee] pl-[18px] pr-[20px]"><h2 class="text-[21.8px] font-bold text-[#23282d]">Featured Image</h2><svg class="w-[14px] h-[10px] fill-[#72777c]" viewBox="0 0 14 10"><path d="M7 0l7 10H0z"/></svg></div>
        <a class="mt-[23px] ml-[18px] block text-[20.2px] text-[#0073aa] underline">Set featured image</a>
      </div>
    </aside>
  </div>
</main>
</body>
</html>
